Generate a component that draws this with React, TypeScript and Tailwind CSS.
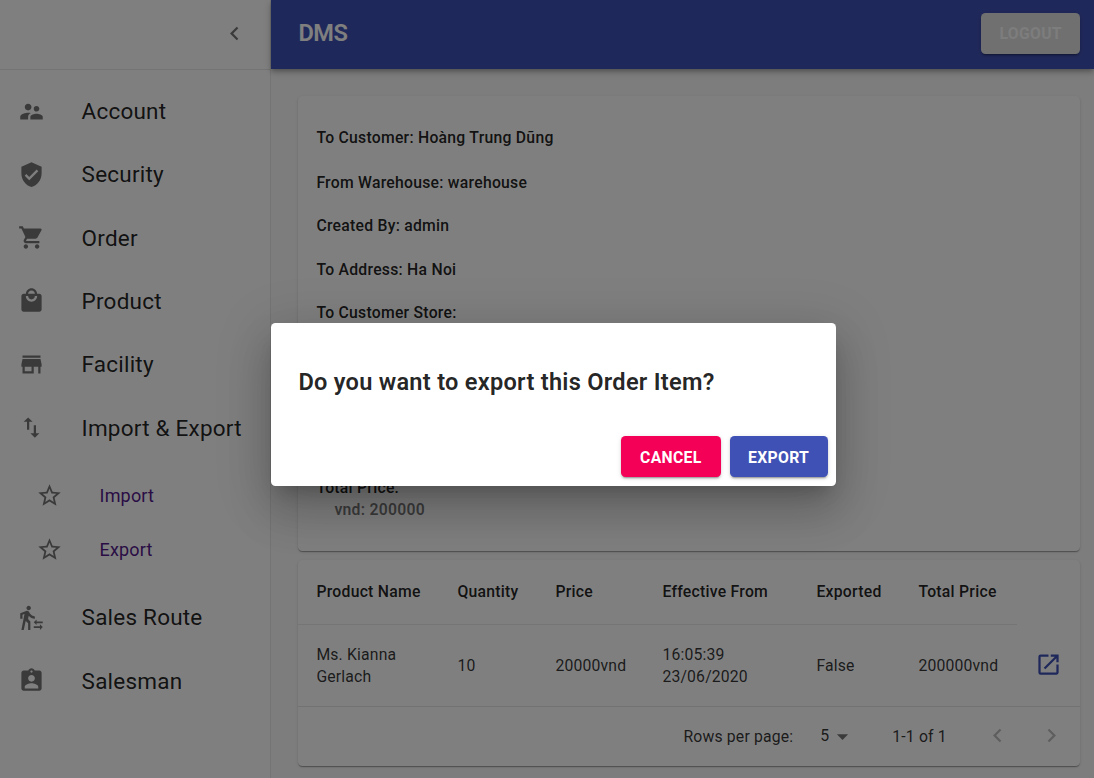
import React from "react";
import type { IconType } from "react-icons";
import {
  MdArrowDropDown,
  MdAssignmentInd,
  MdChevronLeft,
  MdChevronRight,
  MdImportExport,
  MdLocalMall,
  MdOpenInNew,
  MdShoppingCart,
  MdStarBorder,
  MdStore,
  MdSupervisorAccount,
  MdVerifiedUser,
} from "react-icons/md";

function SalesRouteIcon({ className }: { className?: string }) {
  return (
    <svg viewBox="0 0 24 24" fill="currentColor" className={className}>
      <path d="M16.49 15.5v-1.75L14 16.25l2.49 2.5V17H22v-1.5zm3.02 4.25H14v1.5h5.51V23L22 20.5 19.51 18zM9.5 5.5c1.1 0 2-.9 2-2s-.9-2-2-2-2 .9-2 2 .9 2 2 2zM5.75 8.9L3 23h2.1l1.75-8L9 17v6h2v-7.55L8.95 13.4l.6-3C10.85 12 12.8 13 15 13v-2c-1.85 0-3.45-1-4.35-2.45l-.95-1.6C9.35 6.35 8.7 6 8 6c-.25 0-.5.05-.75.15L2 8.3V13h2V9.65l1.75-.75" />
    </svg>
  );
}

type MenuIcon = IconType | typeof SalesRouteIcon;

function MenuItem({ icon: Icon, label }: { icon: MenuIcon; label: string }) {
  return (
    <li className="flex h-[63.3px] items-center px-[18px]">
      <Icon className="size-[27px] shrink-0 text-black/54" />
      <span className="ml-[36.6px] pt-0.5 text-[22.5px] leading-[33.75px] tracking-[0.0094em] text-black/87">
        {label}
      </span>
    </li>
  );
}

function SubItem({ label }: { label: string }) {
  return (
    <li className="flex h-[54px] items-center pl-9">
      <MdStarBorder className="size-[27px] shrink-0 text-black/54" />
      <a className="ml-[36.6px] pt-px text-[18px] leading-[27px] tracking-[0.0094em] text-[#551a8b]">{label}</a>
    </li>
  );
}

function Sidebar() {
  return (
    <aside className="flex w-[271px] shrink-0 flex-col border-r border-black/9 bg-white">
      <div className="flex h-[70px] items-center justify-end border-b border-black/9 pr-[22.5px]">
        <MdChevronLeft className="mb-[3px] size-[27px] text-black/54" />
      </div>
      <ul className="pt-[9.4px]">
        <MenuItem icon={MdSupervisorAccount} label="Account" />
        <MenuItem icon={MdVerifiedUser} label="Security" />
        <MenuItem icon={MdShoppingCart} label="Order" />
        <MenuItem icon={MdLocalMall} label="Product" />
        <MenuItem icon={MdStore} label="Facility" />
        <MenuItem icon={MdImportExport} label="Import & Export" />
        <li>
          <ul className="pt-[9px] pb-[9.4px]">
            <SubItem label="Import" />
            <SubItem label="Export" />
          </ul>
        </li>
        <MenuItem icon={SalesRouteIcon} label="Sales Route" />
        <MenuItem icon={MdAssignmentInd} label="Salesman" />
      </ul>
    </aside>
  );
}

const paper =
  "rounded-[4.5px] bg-white shadow-[0_2px_1px_-1px_rgba(0,0,0,0.2),0_1px_1px_0_rgba(0,0,0,0.14),0_1px_3px_0_rgba(0,0,0,0.12)]";

function OrderInfo() {
  return (
    <section className={`${paper} h-[455px] px-[18px] pt-[29.5px] text-[15.75px] font-medium leading-6 tracking-[0.016em] text-black/87`}>
      <p className="mb-[21px]">To Customer: Hoàng Trung Dũng</p>
      <p className="mb-[19px]">From Warehouse: warehouse</p>
      <p className="mb-5">Created By: admin</p>
      <p className="mb-[19px]">To Address: Ha Noi</p>
      <p className="mb-[152px]">To Customer Store:</p>
      <p className="leading-[22px]">Total Price:</p>
      <p className="pl-[18px] leading-[22px] font-semibold text-black/54">vnd: 200000</p>
    </section>
  );
}

const headers = ["Product Name", "Quantity", "Price", "Effective From", "Exported", "Total Price"];
const cells = ["Ms. Kianna Gerlach", "10", "20000vnd", "16:05:39 23/06/2020", "False", "200000vnd"];

function ItemsTable() {
  return (
    <section className={`${paper} mt-[9px] h-[206px] text-[15.75px] tracking-[0.01071em] text-black/87`}>
      <table className="w-full table-fixed border-separate border-spacing-0 text-left">
        <colgroup>
          <col className="w-[141px]" />
          <col className="w-[98px]" />
          <col className="w-[107px]" />
          <col className="w-[154px]" />
          <col className="w-[102px]" />
          <col className="w-[117px]" />
          <col />
        </colgroup>
        <thead>
          <tr className="h-[64.5px]">
            {headers.map((h) => (
              <th key={h} className="border-b border-[#eaeaea] px-[18px] font-medium tracking-[0.016em] whitespace-nowrap">
                {h}
              </th>
            ))}
            <th />
          </tr>
        </thead>
        <tbody>
          <tr className="h-[82px]">
            {cells.map((c) => (
              <td key={c} className="border-b border-[#e5e5e5] px-[18px] pt-0.5 leading-[22px] text-black/80">
                {c}
              </td>
            ))}
            <td className="border-b border-[#e5e5e5] pl-[18px]">
              <MdOpenInNew className="mb-px size-[27px] text-[#3f51b5]" />
            </td>
          </tr>
        </tbody>
      </table>
      <div className="flex h-[59px] items-center pr-[15px] text-black/80">
        <span className="ml-auto pt-px">Rows per page:</span>
        <span className="mb-px ml-[27px]">5</span>
        <MdArrowDropDown className="size-[27px] text-black/54" />
        <span className="ml-9 pt-px">1-1 of 1</span>
        <MdChevronLeft className="mb-0.5 ml-[37.6px] size-[27px] text-black/26" />
        <MdChevronRight className="mb-0.5 ml-[27px] size-[27px] text-black/26" />
      </div>
    </section>
  );
}

const raised =
  "flex h-[41px] items-center justify-center rounded-[4.5px] text-[15.75px] font-bold tracking-[0.02em] shadow-[0_3px_1px_-2px_rgba(0,0,0,0.2),0_2px_2px_0_rgba(0,0,0,0.14),0_1px_5px_0_rgba(0,0,0,0.12)]";

function ConfirmDialog() {
  return (
    <div className="absolute inset-0 bg-black/50">
      <div
        role="dialog"
        className="absolute left-[271.4px] top-[323.4px] flex h-[163px] w-[565px] flex-col rounded-[4.5px] bg-white shadow-[0_12px_17px_-8px_rgba(0,0,0,0.2),0_27px_43px_3px_rgba(0,0,0,0.14),0_10px_52px_9px_rgba(0,0,0,0.12)]"
      >
        <h2 className="px-[27px] pt-[40.6px] text-[23.6px] font-semibold leading-9 tracking-[0.0112em] text-black/87">
          Do you want to export this Order Item?
        </h2>
        <div className="mt-auto flex justify-end gap-[9px] py-[9px] pr-[8.8px]">
          <button className={`${raised} w-[99.5px] bg-[#f50057] pt-0.5 text-white`}>CANCEL</button>
          <button className={`${raised} w-[98px] bg-[#3f51b5] pt-0.5 text-white`}>EXPORT</button>
        </div>
      </div>
    </div>
  );
}

export default function App() {
  return (
    <div className="relative flex h-[778px] w-[1094px] overflow-hidden bg-[#fafafa] font-[Roboto,sans-serif]">
      <Sidebar />
      <div className="flex min-w-0 flex-1 flex-col">
        <header className="flex h-[69.3px] shrink-0 items-center justify-between bg-[#3f51b5] pl-[27.4px] pr-[13.6px] shadow-[0_2px_4px_-1px_rgba(0,0,0,0.2),0_4px_5px_0_rgba(0,0,0,0.14),0_1px_10px_0_rgba(0,0,0,0.12)]">
          <h1 className="mb-0.5 text-[23.6px] font-semibold tracking-[-0.02em] text-white">DMS</h1>
          <button className={`${raised} mb-0.5 w-[99.5px] bg-[#e0e0e0] text-[#fafafa]`}>LOGOUT</button>
        </header>
        <main className="pl-[27.4px] pr-[13.6px] pt-[27.2px]">
          <OrderInfo />
          <ItemsTable />
        </main>
      </div>
      <ConfirmDialog />
    </div>
  );
}
